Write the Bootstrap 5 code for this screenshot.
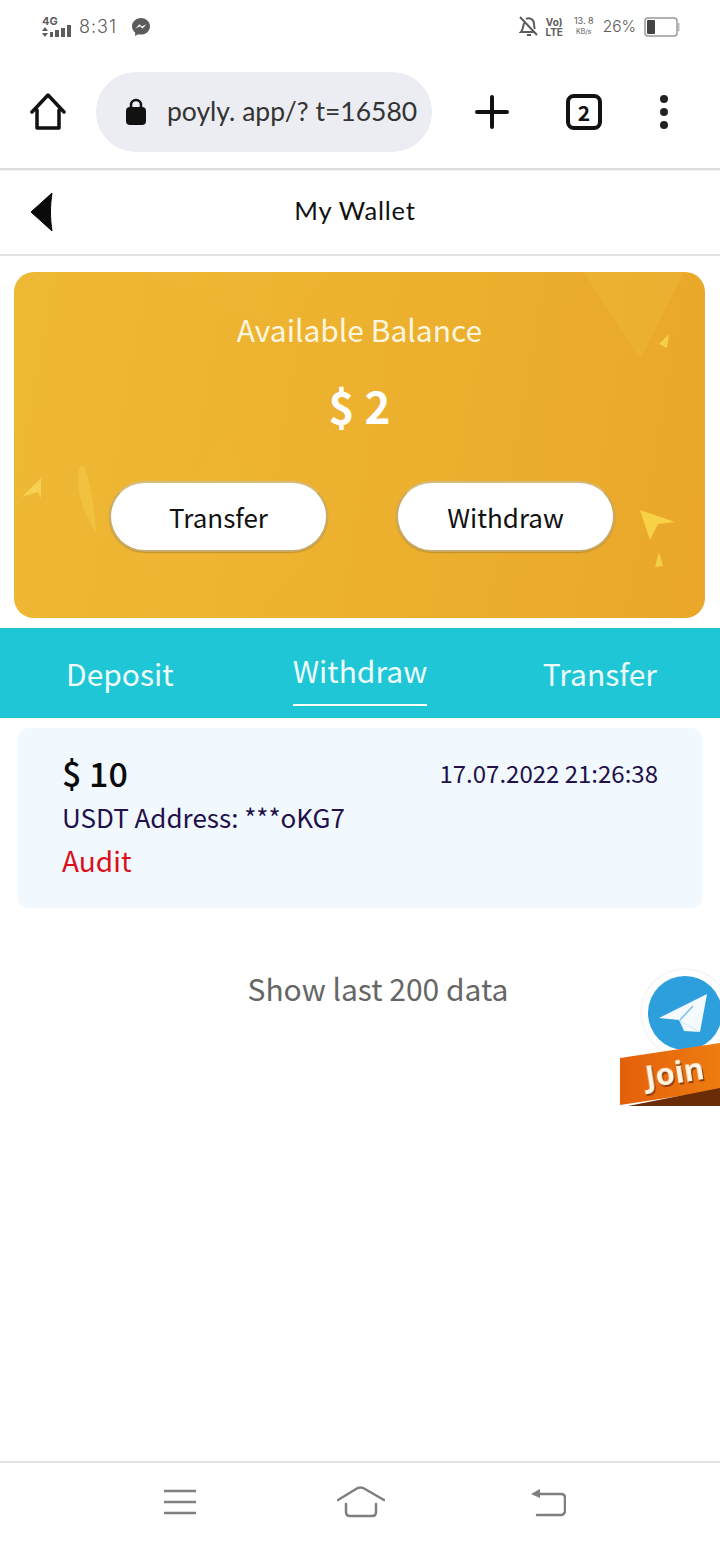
<!DOCTYPE html>
<html lang="en">
<head>
<meta charset="utf-8" />
<meta name="viewport" content="width=device-width,initial-scale=1" />
<title>My Wallet</title>
<link href="https://cdn.jsdelivr.net/npm/bootstrap@5.3.3/dist/css/bootstrap.min.css" rel="stylesheet" />
<style>
  html, body { height:100%; }
  body { width:720px; height:1544px; overflow:hidden; background:#fff; position:relative;
         font-family:"Noto Sans CJK SC","Noto Sans",sans-serif; }
  .phone-status { height:57px; padding:0 40px 4px 42px; color:#5c5c5c; font-family:"Inter",sans-serif; }
  .st-time { font-size:18px; letter-spacing:1px; font-weight:300; margin-left:5px; }
  .st-msg { margin-left:14px; }
  .st-speed { font-size:9px; line-height:10px; text-align:center; font-weight:400; margin-left:11px; }
  .st-pct { font-size:15.5px; font-weight:300; margin-left:9px; }
  .st-lte { font-size:10px; line-height:10px; font-weight:700; text-align:center; margin-left:6px; }
  .browser-bar { height:113px; padding:0 0 2px 30px; border-bottom:2px solid #dedede; }
  .url-pill { width:336px; height:80px; background:#ecedf2; border-radius:40px; margin:0 43px 0 30px;
              padding-left:30px; color:#333; font-family:"Lato",sans-serif; font-size:26.5px; white-space:nowrap; overflow:hidden; }
  .url-pill span { margin-left:21px; }
  .tab-count { width:36px; height:36px; border:4px solid #111; border-radius:8px; font:700 21px "Noto Sans CJK SC",sans-serif; color:#111;
               margin:0 57px 0 57px; }
  .page-head { height:86px; padding-bottom:5px; border-top:1px solid #f4f4f4; border-bottom:2px solid #e2e2e2; position:relative; }
  .page-title { font-family:"Lato",sans-serif; font-size:25.5px; color:#111; letter-spacing:.8px; margin-left:-10px; }
  .back-btn { position:absolute; left:30px; top:21px; }
  .balance-card { margin:16px 15px 10px 14px; height:346px; border-radius:20px; overflow:hidden; position:relative; color:#fff;
                  background:linear-gradient(100deg,#eeb935 0%,#ecb02e 55%,#eaa72a 100%); }
  .card-art { position:absolute; inset:0; }
  .balance-body { position:relative; padding-top:35px; }
  .bal-label { font-size:30px; line-height:44px; color:#fdf6df; }
  .bal-value { font-size:44px; line-height:60px; font-weight:700; margin-top:24px; }
  .bal-actions { margin-top:46px; padding-left:95px; gap:68px; }
  .pill-btn { width:219px; height:71px; border-radius:36px; background:#fff; color:#111; font-size:26px; border:2px solid #c9ab6a;
              border-top-color:#d4bd84; box-shadow:0 1px 1px rgba(120,90,30,.35); }
  .tab-strip { height:90px; background:#1fc6d6; padding:0 63px 0 66px; }
  .tab-strip a { color:#eefbfb; font-size:30px; text-decoration:none; text-align:center; }
  .tab-strip a.tab-on { border-bottom:2px solid #fff; padding-bottom:10px; margin:6px 0 0 3px; width:134px; line-height:48px; }
  .record-row { margin:10px 18px 0 18px; height:180px; background:#f1f9fe; border-radius:10px; padding:20px 44px; color:#22104a; }
  .rec-amt { font-size:34px; line-height:50px; font-weight:500; color:#0a0a0a; }
  .rec-time { font-size:24px; line-height:50px; }
  .rec-line { font-size:26px; line-height:40px; margin-top:-1px; }
  .rec-state { font-size:28px; line-height:46px; color:#d9101c; }
  .data-note { color:#666; font-size:30px; text-align:center; line-height:44px; margin:58px 0 0 36px; }
  .tg-float { position:absolute; right:0; top:968px; }
  .join-txt { font:700 31px "Noto Sans",sans-serif; fill:#fff6e5; filter:drop-shadow(1px 2px 0 #8a3c05); }
  .phone-nav { position:absolute; left:0; right:0; bottom:0; height:83px; border-top:2px solid #e2e2e2; padding:0 0 4px 163px; }
  .nav-mid { margin:0 145px 0 140px; }
</style>
</head>
<body>

<!-- status bar -->
<div class="phone-status d-flex align-items-center">
  <svg width="32" height="24" viewBox="0 0 32 24" fill="#5c5c5c">
    <text x="0" y="10" font-family="Inter,sans-serif" font-size="11" font-weight="700">4G</text>
    <path d="M3 12l3 4H0zM3 22l3-4H0z"/>
    <rect x="8" y="17" width="3" height="5"/><rect x="13" y="15" width="4" height="7"/><rect x="19" y="13" width="4" height="9"/><rect x="25" y="10" width="4" height="12"/>
  </svg>
  <span class="st-time">8:31</span>
  <svg class="st-msg" width="20" height="20" viewBox="0 0 20 20"><path d="M10 1C5 1 1 4.700 1 9.300c0 2.500 1.200 4.700 3.100 6.200V19l3.100-1.800c.9.300 1.800.4 2.800.4 5 0 9-3.700 9-8.300S15 1 10 1z" fill="#5c5c5c"/><path d="M4.500 11.500l4-4.200 2.400 2.300 4.600-2.400-4 4.300-2.400-2.300z" fill="#fff"/></svg>
  <div class="flex-grow-1"></div>
  <svg width="20" height="22" viewBox="0 0 20 22" fill="none" stroke="#5c5c5c" stroke-width="2"><path d="M1 1l17 18M5 7c-1 4-1 7-3 9h13M7 3c3-2 8 0 8 5 0 2 0 3 1 5"/><path d="M8 19h4"/></svg>
  <div class="st-lte">Vo)<br>LTE</div>
  <div class="st-speed">13. 8<br><span style="font-size:7px">KB/s</span></div>
  <span class="st-pct">26%</span>
  <svg class="ms-2" width="36" height="20" viewBox="0 0 36 20" fill="none"><rect x="1" y="1" width="32" height="18" rx="3" stroke="#999" stroke-width="1.500"/><rect x="3" y="3" width="8" height="14" rx="1" fill="#444"/><rect x="34" y="6" width="1.500" height="8" fill="#bbb"/></svg>
</div>

<!-- browser toolbar -->
<div class="browser-bar d-flex align-items-center">
  <svg width="36" height="38" viewBox="0 0 36 38" fill="none" stroke="#111" stroke-width="3.500" stroke-linejoin="round" stroke-linecap="round"><path d="M2 19L18 2l16 17M7 17v18h22V17"/></svg>
  <div class="url-pill d-flex align-items-center">
    <svg width="20" height="28" viewBox="0 0 20 28" class="flex-shrink-0"><path d="M5 12V7a5 5 0 0 1 10 0v5" fill="none" stroke="#111" stroke-width="2.500"/><rect x="0" y="9" width="20" height="18" rx="4" fill="#111"/></svg>
    <span>poyly. app/? t=16580</span>
  </div>
  <svg width="34" height="34" viewBox="0 0 34 34" stroke="#111" stroke-width="4" stroke-linecap="round"><path d="M2 17h30M17 2v30"/></svg>
  <div class="tab-count d-flex align-items-center justify-content-center">2</div>
  <svg width="10" height="36" viewBox="0 0 10 36" fill="#222"><circle cx="5" cy="5" r="4"/><circle cx="5" cy="18" r="4"/><circle cx="5" cy="31" r="4"/></svg>
</div>

<!-- page header -->
<div class="page-head d-flex align-items-center justify-content-center">
  <svg class="back-btn" width="24" height="40" viewBox="0 0 24 40"><path d="M22 1C20 14 20 26 22 39L1 20z" fill="#0a0a0a" stroke="#0a0a0a" stroke-linejoin="round"/></svg>
  <span class="page-title">My Wallet</span>
</div>

<!-- balance card -->
<div class="balance-card">
  <svg class="card-art" viewBox="0 0 691 346">
    <path d="M570 0h100L626 88z" fill="#f0c040" opacity=".3"/>
    <path d="M130 0h190l-70 50z" fill="#f0bd3a" opacity=".15"/>
    <path d="M150 250l60-90 90 120-60 66H140z" fill="#eeb633" opacity=".25"/>
    <path d="M645 72l10-10-2 14z" fill="#f6cf4a"/>
    <path d="M27 206L8 225l16-5 3 6z" fill="#f6d050"/>
    <path d="M66 194c-6 20 2 45 16 66-1-22-6-52-12-66z" fill="#f1c23f"/>
    <path d="M626 238l35 12-17 2-8 16z" fill="#f8d246"/>
    <path d="M645 280l4 14-8 1z" fill="#f6cf4a"/>
  </svg>
  <div class="balance-body text-center">
    <div class="bal-label">Available Balance</div>
    <div class="bal-value">$ 2</div>
    <div class="bal-actions d-flex">
      <button class="btn pill-btn p-0" type="button">Transfer</button>
      <button class="btn pill-btn p-0" type="button">Withdraw</button>
    </div>
  </div>
</div>

<!-- tabs -->
<div class="tab-strip d-flex align-items-center justify-content-between">
  <a href="#">Deposit</a>
  <a href="#" class="tab-on">Withdraw</a>
  <a href="#">Transfer</a>
</div>

<!-- record -->
<div class="record-row">
  <div class="d-flex justify-content-between">
    <div class="rec-amt">$ 10</div>
    <div class="rec-time">17.07.2022 21:26:38</div>
  </div>
  <div class="rec-line">USDT Address: ***oKG7</div>
  <div class="rec-state">Audit</div>
</div>

<div class="data-note">Show last 200 data</div>

<!-- telegram join -->
<svg class="tg-float" width="100" height="140" viewBox="0 0 100 140">
  <defs><linearGradient id="joinFill" x1="0" x2="1" y1="0" y2="0"><stop offset="0" stop-color="#e4600c"/><stop offset="1" stop-color="#ee7c10"/></linearGradient></defs>
  <circle cx="65" cy="45" r="44" fill="#fff" stroke="#f5f5f5" stroke-width="1.500"/>
  <circle cx="65" cy="45" r="37" fill="#2c9fdc"/>
  <path d="M39 50l48-24-7 38-20-11 4 10-5-11z" fill="#f4fafd"/>
  <path d="M60 53l4 10 16 1z" fill="#f4fafd"/>
  <path d="M60 52l13-14" stroke="#7cc2e8" stroke-width="1.500" fill="none"/>
  <path d="M0 90l100-15v47L0 137z" fill="url(#joinFill)"/>
  <path d="M8 138l92-18v18z" fill="#6a2c06"/>
  <text class="join-txt" x="27" y="120" transform="rotate(-9 27 120)">Join</text>
</svg>

<!-- phone nav -->
<div class="phone-nav d-flex align-items-center">
  <svg width="34" height="28" viewBox="0 0 34 28" stroke="#7f7f7f" stroke-width="2.500"><path d="M1 3h32M1 14h32M1 25h32"/></svg>
  <svg class="nav-mid" width="48" height="32" viewBox="0 0 48 32" fill="none" stroke="#7f7f7f" stroke-width="2.500" stroke-linecap="round"><path d="M1 14L19 3c3-2 6-2 9 0l19 11M9 18v8c0 3 2 4 4 4h22c2 0 4-1 4-4v-8"/></svg>
  <svg width="36" height="30" viewBox="0 0 36 30" fill="none" stroke="#7f7f7f" stroke-width="2.500" stroke-linecap="round"><path d="M6 7h25c2 0 4 1 4 4v13c0 2-2 4-4 4H7"/><path d="M1 7l9-5v9z" fill="#7f7f7f" stroke="none"/></svg>
</div>

<script src="https://cdn.jsdelivr.net/npm/bootstrap@5.3.3/dist/js/bootstrap.bundle.min.js"></script>
</body>
</html>
